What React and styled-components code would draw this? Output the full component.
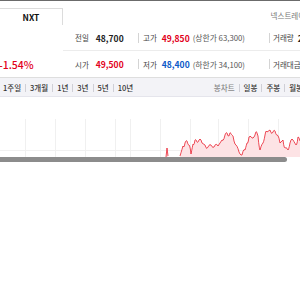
import React from 'react'
import styled, { createGlobalStyle } from 'styled-components'

const GlobalStyle = createGlobalStyle`
    html, body {
        margin: 0;
        padding: 0;
        background: #fff;
    }
    body {
        font-family: "Noto Sans CJK KR", "Noto Sans", sans-serif;
        color: #222;
    }
`

const Page = styled.div`
    width: 300px;
    height: 300px;
    overflow: hidden;
    border-top: 1px solid #6b6b6b;
    box-sizing: border-box;
`

const Header = styled.div`
    height: 24px;
    display: flex;
    align-items: flex-end;
    justify-content: space-between;
`

const Tab = styled.div`
    width: 62px;
    height: 16px;
    border-top: 1px solid #dcdcdc;
    border-right: 1px solid #dcdcdc;
    display: flex;
    align-items: center;
    justify-content: center;
    font-size: 8.5px;
    font-weight: 700;
    color: #111;
`

const SiteName = styled.span`
    align-self: flex-start;
    margin-top: 9px;
    margin-right: -12px;
    font-size: 7.5px;
    color: #777;
    white-space: nowrap;
`

const Info = styled.div`
    display: flex;
    border-bottom: 1px solid #dedede;
`

const PriceCol = styled.div`
    width: 63px;
    flex: none;
    display: flex;
    flex-direction: column;
    justify-content: flex-end;
    height: 52px;
`

const Change = styled.div`
    height: 26px;
    display: flex;
    align-items: center;
    margin-left: -1px;
    font-size: 10.5px;
    font-weight: 500;
    color: #e2001a;
    white-space: nowrap;
`

const Rows = styled.div`
    flex: 1;
    min-width: 0;
`

const Row = styled.div`
    height: 26px;
    display: flex;
    align-items: center;
    border-bottom: ${({ last }) => (last ? 'none' : '1px solid #ececec')};
    box-sizing: border-box;
    white-space: nowrap;
`

const Cell = styled.div`
    position: relative;
    width: ${({ w }) => w}px;
    flex: none;
    display: flex;
    align-items: center;
    padding-left: ${({ pad }) => pad}px;
    box-sizing: border-box;

    &::before {
        content: ${({ sep }) => (sep ? "''" : 'none')};
        position: absolute;
        left: 0;
        top: 50%;
        height: 10px;
        margin-top: -5px;
        border-left: 1px solid #d4d4d4;
    }
`

const Label = styled.span`
    font-size: 7.5px;
    color: #444;
    margin-right: ${({ gap }) => gap}px;
`

const Value = styled.span`
    font-size: 8.5px;
    font-weight: 700;
    color: ${({ tone }) => (tone === 'up' ? '#e2001a' : tone === 'down' ? '#0a58c8' : '#222')};
`

const Limit = styled.span`
    margin-left: 3px;
    font-size: 7.8px;
    color: #555;
`

const PeriodBar = styled.div`
    height: 18px;
    background: #f3f3f7;
    border-bottom: 1px solid #e5e5ec;
    display: flex;
    align-items: center;
    justify-content: space-between;
    padding-left: 3px;
    white-space: nowrap;
`

const Group = styled.div`
    display: flex;
    align-items: center;
    margin-right: ${({ over }) => (over ? `-${over}px` : 0)};
`

const Item = styled.span`
    font-size: 7.5px;
    font-weight: 500;
    color: ${({ muted }) => (muted ? '#8a8a8a' : '#333')};

    &:not(:first-child)::before {
        content: '';
        display: inline-block;
        width: 1px;
        height: 8px;
        background: #cfcfd6;
        margin: 0 4px 0 4px;
        vertical-align: -1px;
    }
`

const ChartArea = styled.div`
    padding-top: 22px;
`

const Plot = styled.div`
    height: 38px;
`

const Scroll = styled.div`
    width: 287px;
    height: 5px;
    border-radius: 0 3px 3px 0;
    background: #8c8c8c;
`

const gridX = [25, 55, 85, 115, 130, 160, 190, 218, 248, 278]

const spike = [
    [166, 38], [167, 29], [168, 37],
]
const keys = [
    [180, 37], [183, 27], [185, 24], [187, 22], [189, 26], [191, 35], [193, 25], [195, 21],
    [197, 23], [199, 21], [202, 24], [205, 26], [208, 28], [211, 26], [214, 28], [218, 27],
    [222, 21], [225, 16], [227, 14], [229, 17], [231, 15], [233, 17], [236, 26], [239, 33],
    [242, 36], [245, 31], [247, 24], [249, 18], [252, 19], [255, 16], [257, 14], [258, 17],
    [260, 31], [263, 24], [265, 16], [267, 13], [270, 11], [273, 13], [275, 12], [277, 16],
    [280, 24], [283, 21], [285, 29], [288, 31], [290, 24], [293, 21], [296, 26], [298, 18], [300, 22],
]

// fill in with small wiggles between the key points so the line looks like tick data
const noisy = keys.flatMap(([x, y], i) => {
    if (i === 0) return [[x, y]]
    const [px, py] = keys[i - 1]
    const out = []
    for (let s = 1; s <= 3; s++) {
        const t = s / 3
        const jitter = s === 3 ? 0 : ((i * 7 + s * 5) % 5) - 2
        out.push([+(px + (x - px) * t).toFixed(2), +(py + (y - py) * t + jitter).toFixed(2)])
    }
    return out
})

const pts = (arr) => arr.map(([x, y]) => `${x},${y}`).join(' ')

function PriceChart() {
    const base = 38
    return (
        <svg width="300" height="38" viewBox="0 0 300 38">
            {gridX.map((x) => (
                <line key={x} x1={x + 0.5} y1="0" x2={x + 0.5} y2="38" stroke="#f0f0f0" />
            ))}
            <line x1="0" y1="31.5" x2="300" y2="31.5" stroke="#f0f0f0" />
            <polygon points={`166,${base} ${pts(spike)} 168,${base}`} fill="#fde3e5" />
            <polygon points={`180,${base} ${pts(noisy)} 300,${base}`} fill="#fde3e5" />
            <polyline points={pts(spike)} fill="none" stroke="#e8202f" strokeWidth="0.8" />
            <polyline points={pts(noisy)} fill="none" stroke="#e8202f" strokeWidth="0.8" />
        </svg>
    )
}

export default function App() {
    return (
        <Page>
            <GlobalStyle />
            <Header>
                <Tab>NXT</Tab>
                <SiteName>넥스트레이드</SiteName>
            </Header>
            <Info>
                <PriceCol>
                    <Change>-1.54%</Change>
                </PriceCol>
                <Rows>
                    <Row>
                        <Cell w={75} pad={12}>
                            <Label gap={7}>전일</Label>
                            <Value>48,700</Value>
                        </Cell>
                        <Cell w={131} pad={5} sep>
                            <Label gap={5}>고가</Label>
                            <Value tone="up">49,850</Value>
                            <Limit>(상한가 63,300)</Limit>
                        </Cell>
                        <Cell w={80} pad={4} sep>
                            <Label gap={4}>거래량</Label>
                            <Value>2,184,512</Value>
                        </Cell>
                    </Row>
                    <Row last>
                        <Cell w={75} pad={12}>
                            <Label gap={7}>시가</Label>
                            <Value tone="up">49,500</Value>
                        </Cell>
                        <Cell w={131} pad={5} sep>
                            <Label gap={5}>저가</Label>
                            <Value tone="down">48,400</Value>
                            <Limit>(하한가 34,100)</Limit>
                        </Cell>
                        <Cell w={80} pad={4} sep>
                            <Label gap={4}>거래대금</Label>
                            <Value>106,220</Value>
                        </Cell>
                    </Row>
                </Rows>
            </Info>
            <PeriodBar>
                <Group>
                    <Item>1주일</Item>
                    <Item>3개월</Item>
                    <Item>1년</Item>
                    <Item>3년</Item>
                    <Item>5년</Item>
                    <Item>10년</Item>
                </Group>
                <Group over={3}>
                    <Item muted>봉차트</Item>
                    <Item>일봉</Item>
                    <Item>주봉</Item>
                    <Item>월봉</Item>
                </Group>
            </PeriodBar>
            <ChartArea>
                <Plot>
                    <PriceChart />
                </Plot>
                <Scroll />
            </ChartArea>
        </Page>
    )
}
